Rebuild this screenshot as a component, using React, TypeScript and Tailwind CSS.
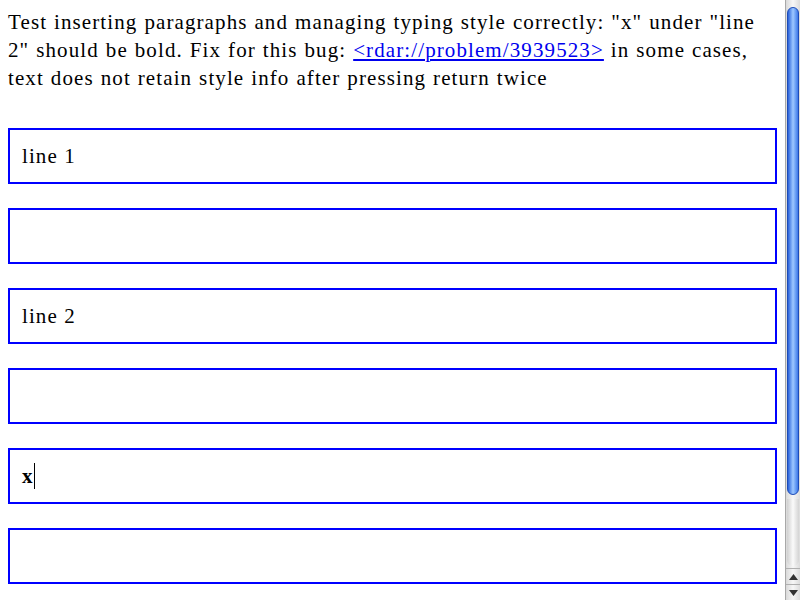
import type { FC } from 'react';

const serif = { fontFamily: '"Liberation Serif", "Times New Roman", serif' };

const Box: FC<{ children?: React.ReactNode }> = ({ children }) => (
  <div className="h-[56px] border-2 border-[#0000ff] px-3 flex items-center text-[21px] leading-[28px] tracking-[1.1px]">
    {children}
  </div>
);

const Scrollbar: FC = () => (
  <div className="w-[15px] h-full flex flex-col bg-gradient-to-r from-[#d9d9d9] via-[#f7f7f7] to-[#dcdcdc] border-l border-[#a8a8a8]">
    <div className="flex-1 flex flex-col pt-[7px] pb-[2px]">
      <div className="h-[488px] mx-[1px] rounded-full bg-gradient-to-r from-[#2a5fd8] via-[#9ec8ff] to-[#3d78e8] border border-[#1d4cb8]" />
      <div className="flex-1 mt-1 mx-[1px] rounded-b-full bg-gradient-to-r from-[#d0d0d0] via-[#fafafa] to-[#d4d4d4]" />
    </div>
    <div className="h-[16px] flex items-center justify-center border-t border-[#b0b0b0]">
      <svg width="9" height="6" viewBox="0 0 9 6"><path d="M4.5 0L9 6H0z" fill="#333" /></svg>
    </div>
    <div className="h-[16px] flex items-center justify-center border-t border-[#b0b0b0]">
      <svg width="9" height="6" viewBox="0 0 9 6"><path d="M0 0h9L4.5 6z" fill="#333" /></svg>
    </div>
  </div>
);

export default function App() {
  return (
    <div className="w-[800px] h-[600px] flex bg-white text-black overflow-hidden" style={serif}>
      <div className="flex-1 p-2 flex flex-col">
        <p className="text-[21px] leading-[28px] tracking-[1.1px] [word-spacing:0.6px]">
          Test inserting paragraphs and managing typing style correctly: "x" under "line 2" should be bold.
          Fix for this bug:{' '}
          <a href="#" className="text-[#0000ee] underline">&lt;rdar://problem/3939523&gt;</a> in some cases,
          text does not retain style info after pressing return twice
        </p>
        <div className="mt-[36px] flex flex-col gap-6">
          <Box>line 1</Box>
          <Box />
          <Box>line 2</Box>
          <Box />
          <Box>
            <span className="font-bold">x</span>
            <span className="inline-block w-px h-[26px] bg-black" />
          </Box>
          <Box />
        </div>
      </div>
      <Scrollbar />
    </div>
  );
}
